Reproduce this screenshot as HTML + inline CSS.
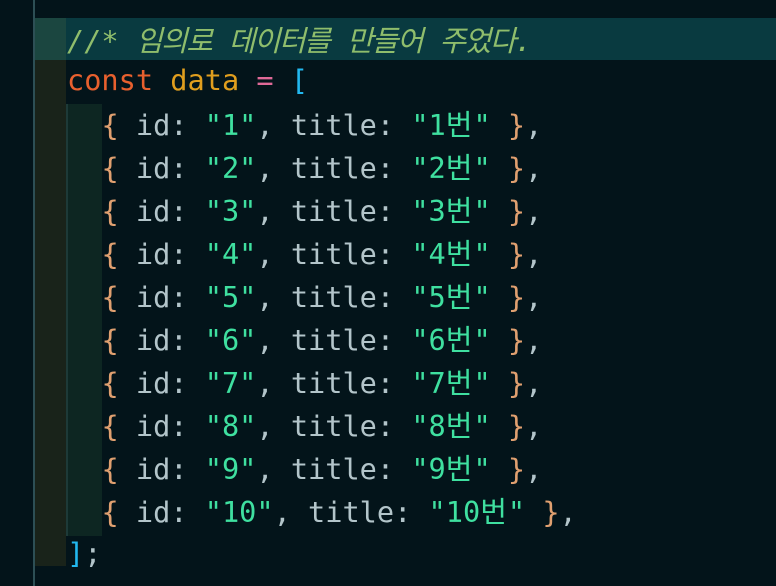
<!DOCTYPE html>
<html><head><meta charset="utf-8"><style>
body{margin:0;width:776px;height:586px;background:#03141a;overflow:hidden;position:relative;font-family:"DejaVu Sans Mono","Liberation Mono","Noto Sans CJK KR",monospace;font-size:28.6px}
.d{position:absolute}
.l{position:absolute;left:67px;height:43px;line-height:43px;white-space:pre;color:#b3c5ca}
.k{font-family:"Noto Sans CJK KR",sans-serif;font-size:29px;letter-spacing:1px}
.c .k{letter-spacing:-1.5px}
.c{color:#8fbd6c;font-style:italic}
.kw{color:#e8602e}.v{color:#e09e1e}.o{color:#e06a98}.b{color:#22b8ef}.br{color:#e0a070}.s{color:#3fe0a0}
</style></head><body>
<div class="d" style="left:33px;top:0;width:2px;height:586px;background:#2d4f55"></div>
<div class="d" style="left:35px;top:18px;width:741px;height:42px;background:#093a40"></div>
<div class="d" style="left:35px;top:18px;width:31px;height:42px;background:#1b4640"></div>
<div class="d" style="left:35px;top:60px;width:31px;height:506px;background:#19231a"></div>
<div class="d" style="left:66px;top:104px;width:36px;height:432px;background:#0d2622"></div>
<div class="d" style="left:66px;top:104px;width:2px;height:432px;background:#1d3a38"></div>
<div class="l c" style="top:18px">//* <span class="k">임의로</span> <span class="k">데이터를</span> <span class="k">만들어</span> <span class="k">주었다</span>.</div>
<div class="l" style="top:59px"><span class="kw">const</span> <span class="v">data</span> <span class="o">=</span> <span class="b">[</span></div>
<div class="l" style="top:102px">  <span class="br">{</span> id: <span class="s">"1"</span>, title: <span class="s">"1<span class="k">번</span>"</span> <span class="br">}</span>,</div>
<div class="l" style="top:145px">  <span class="br">{</span> id: <span class="s">"2"</span>, title: <span class="s">"2<span class="k">번</span>"</span> <span class="br">}</span>,</div>
<div class="l" style="top:188px">  <span class="br">{</span> id: <span class="s">"3"</span>, title: <span class="s">"3<span class="k">번</span>"</span> <span class="br">}</span>,</div>
<div class="l" style="top:231px">  <span class="br">{</span> id: <span class="s">"4"</span>, title: <span class="s">"4<span class="k">번</span>"</span> <span class="br">}</span>,</div>
<div class="l" style="top:274px">  <span class="br">{</span> id: <span class="s">"5"</span>, title: <span class="s">"5<span class="k">번</span>"</span> <span class="br">}</span>,</div>
<div class="l" style="top:317px">  <span class="br">{</span> id: <span class="s">"6"</span>, title: <span class="s">"6<span class="k">번</span>"</span> <span class="br">}</span>,</div>
<div class="l" style="top:360px">  <span class="br">{</span> id: <span class="s">"7"</span>, title: <span class="s">"7<span class="k">번</span>"</span> <span class="br">}</span>,</div>
<div class="l" style="top:403px">  <span class="br">{</span> id: <span class="s">"8"</span>, title: <span class="s">"8<span class="k">번</span>"</span> <span class="br">}</span>,</div>
<div class="l" style="top:446px">  <span class="br">{</span> id: <span class="s">"9"</span>, title: <span class="s">"9<span class="k">번</span>"</span> <span class="br">}</span>,</div>
<div class="l" style="top:489px">  <span class="br">{</span> id: <span class="s">"10"</span>, title: <span class="s">"10<span class="k">번</span>"</span> <span class="br">}</span>,</div>
<div class="l" style="top:532px"><span class="b">]</span>;</div>
</body></html>
